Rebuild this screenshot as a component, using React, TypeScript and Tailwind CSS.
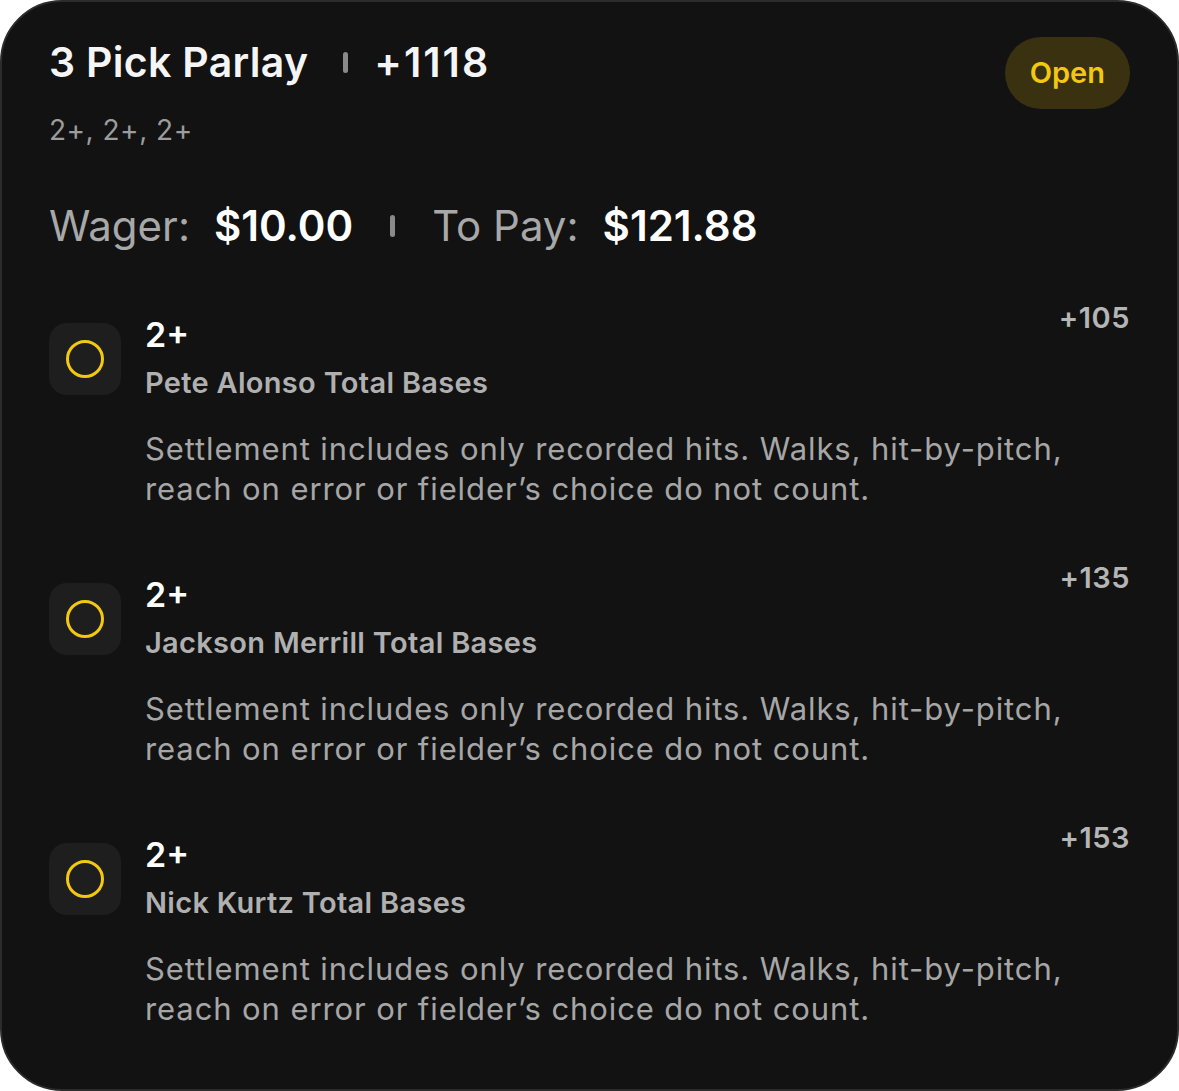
import React from "react";

type Leg = { line: string; market: string; odds: string };

const legs: Leg[] = [
  { line: "2+", market: "Pete Alonso Total Bases", odds: "+105" },
  { line: "2+", market: "Jackson Merrill Total Bases", odds: "+135" },
  { line: "2+", market: "Nick Kurtz Total Bases", odds: "+153" },
];

const note =
  "Settlement includes only recorded hits. Walks, hit-by-pitch, reach on error or fielder\u2019s choice do not count.";

const Divider = ({ className }: { className: string }) => (
  <span className={"inline-block w-[5px] rounded-full bg-[#8a8a8a] " + className} />
);

const LegRow = ({ leg }: { leg: Leg }) => (
  <div className="flex items-start">
    <div className="mt-[5px] flex h-[72px] w-[72px] shrink-0 items-center justify-center rounded-[18px] bg-[#1e1e1e]">
      <span className="block h-[38px] w-[38px] rounded-full border-[3px] border-[#f2c811]" />
    </div>
    <div className="ml-[24px] flex-1">
      <div className="flex items-start justify-between">
        <div className="-mt-[3px] text-[34px] font-semibold leading-[40px] text-white">{leg.line}</div>
        <div className="-mt-[17px] text-[29px] font-semibold leading-[34px] tracking-[0.5px] text-[#b5b5b5]">
          {leg.odds}
        </div>
      </div>
      <div className="mt-[9px] text-[29px] font-semibold leading-[38px] tracking-[0.3px] text-[#b0b0b0]">
        {leg.market}
      </div>
      <p className="mt-[27px] w-[930px] text-[31px] leading-[40px] tracking-[0.9px] text-[#a6a6a6]">{note}</p>
    </div>
  </div>
);

export default function App() {
  return (
    <div className="h-[1091px] w-[1179px] bg-white" style={{ fontFamily: "Inter, 'Noto Sans', sans-serif" }}>
      <div className="h-full w-full rounded-[62px] border-2 border-[#2c2c2c] bg-[#121212] px-[47px] pt-[34px]">
        <div className="flex items-start justify-between">
          <div>
            <div className="flex items-center text-[41px] font-semibold leading-[52px] text-[#f5f5f5]">
              <span className="tracking-[0.3px]">3 Pick Parlay</span>
              <Divider className="ml-[35px] mr-[26px] h-[21px]" />
              <span className="tracking-[2px]">+1118</span>
            </div>
            <div className="mt-[24px] text-[28px] leading-[36px] tracking-[0.5px] text-[#9c9c9c]">2+, 2+, 2+</div>
          </div>
          <div className="mt-[1px] flex h-[72px] items-center rounded-full bg-[#3a3110] px-[25px] text-[29px] font-semibold text-[#f2c811]">
            Open
          </div>
        </div>

        <div className="mt-[50px] flex items-center text-[42px] leading-[56px]">
          <span className="text-[#a8a8a8]">Wager:</span>
          <span className="ml-[24px] font-semibold text-white">$10.00</span>
          <Divider className="mx-[37px] h-[22px]" />
          <span className="text-[#a8a8a8]">To Pay:</span>
          <span className="ml-[24px] font-semibold text-white">$121.88</span>
        </div>

        <div className="mt-[64px] flex flex-col gap-[69px]">
          {legs.map((leg) => (
            <LegRow key={leg.market} leg={leg} />
          ))}
        </div>
      </div>
    </div>
  );
}
